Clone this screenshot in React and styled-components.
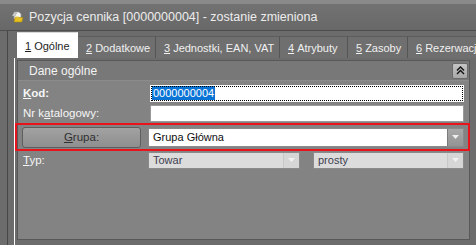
import React from "react";
import styled, { createGlobalStyle } from "styled-components";

const Global = createGlobalStyle`
  html, body { margin: 0; padding: 0; background: #6c6c6c; }
  body { font-family: "Liberation Sans", Arial, sans-serif; font-size: 11px; }
  #root { width: 476px; height: 245px; overflow: hidden; }
`;

const Window = styled.div`
  width: 476px;
  height: 245px;
  display: flex;
  flex-direction: column;
  background: #6c6c6c;
  box-shadow: inset 2px 0 #787878, inset 3px 0 #606060;
`;

const TitleBar = styled.div`
  height: 26px;
  flex-shrink: 0;
  border-top: 4px solid #8a8a8a;
  border-bottom: 1px solid #4e4e4e;
  background: linear-gradient(#727272, #686868);
  display: flex;
  align-items: center;
  padding-left: 11px;
  gap: 5px;
  color: #ececec;
  font-size: 12.5px;
`;

const TabStrip = styled.div`
  height: 27px;
  flex-shrink: 0;
  display: flex;
  align-items: flex-end;
  padding-left: 17px;
  overflow: hidden;
  box-shadow: inset 7px 0 #6c6c6c, inset 8px 0 #474747;
`;

const Tab = styled.div`
  height: ${(p) => (p.$active ? 26 : 22)}px;
  width: ${(p) => (p.$w ? `${p.$w}px` : "auto")};
  box-sizing: border-box;
  padding: 0 0 0 8px;
  display: flex;
  align-items: center;
  white-space: nowrap;
  flex-shrink: 0;
  background: ${(p) => (p.$active ? "#ffffff" : "#6f6f6f")};
  color: ${(p) => (p.$active ? "#1e1e1e" : "#f0f0f0")};
  border-right: 1px solid ${(p) => (p.$active ? "#ffffff" : "#555555")};
  border-top: 1px solid ${(p) => (p.$active ? "#d8d8d8" : "#5c5c5c")};
  font-size: 11px;
  u { text-decoration: underline; margin-right: 3px; }
`;

const Body = styled.div`
  flex: 1;
  display: flex;
  padding-left: 14px;
  box-shadow: inset 7px 0 #6c6c6c, inset 8px 0 #474747;
`;

const TabPage = styled.div`
  flex: 1;
  display: flex;
  border-left: 1px solid #ffffff;
  padding: 2px 6px 5px 2px;
`;

const GroupBox = styled.div`
  flex: 1;
  display: flex;
  flex-direction: column;
  border: 1px solid #585858;
  background: #838383;
`;

const GroupHeader = styled.div`
  height: 19px;
  display: flex;
  align-items: center;
  justify-content: space-between;
  padding: 0 1px 0 11px;
  background: #787878;
  border-bottom: 1px solid #8c8c8c;
  color: #f4f4f4;
  font-size: 12px;
`;

const CollapseBtn = styled.div`
  width: 14px;
  height: 14px;
  border: 1px solid #6a6a6a;
  border-radius: 2px;
  background: linear-gradient(#c4c4c4, #a8a8a8);
  display: flex;
  align-items: center;
  justify-content: center;
`;

const Form = styled.div`
  display: flex;
  flex-direction: column;
  padding: 2px 5px 0 5px;
`;

const Row = styled.div`
  display: flex;
  align-items: center;
  height: ${(p) => p.$h || 20}px;
  position: relative;
`;

const Label = styled.div`
  width: 127px;
  flex-shrink: 0;
  color: #f6f6f6;
  font-weight: ${(p) => (p.$bold ? 700 : 400)};
  font-size: 11.5px;
  u { text-decoration: underline; }
`;

const TextInput = styled.div`
  flex: 1;
  height: 17px;
  box-sizing: border-box;
  background: #ffffff;
  border: 1px solid ${(p) => (p.$focus ? "#ffffff" : "#9a9a9a")};
  outline: ${(p) => (p.$focus ? "1px dotted #000" : "none")};
  outline-offset: -2px;
  display: flex;
  align-items: center;
  padding-left: 1px;
  font-size: 11px;
`;

const Selected = styled.span`
  background: #0a74d6;
  color: #ffffff;
  padding: 0 1px;
  line-height: 14px;
`;

const RedFrame = styled.div`
  position: absolute;
  left: -8px;
  right: -6px;
  top: 0;
  bottom: 0;
  border: 2px solid #e8141c;
  pointer-events: none;
`;

const GroupButton = styled.div`
  width: 119px;
  height: 21px;
  box-sizing: border-box;
  margin-right: 7px;
  margin-left: -1px;
  border: 1px solid #5e5e5e;
  border-radius: 3px;
  background: linear-gradient(#a2a2a2, #8e8e8e);
  color: #303030;
  display: flex;
  align-items: center;
  justify-content: center;
  font-size: 11.5px;
  u { text-decoration: underline; }
`;

const Combo = styled.div`
  flex: ${(p) => (p.$w ? "0 0 auto" : 1)};
  width: ${(p) => (p.$w ? `${p.$w}px` : "auto")};
  height: ${(p) => p.$h || 17}px;
  box-sizing: border-box;
  margin-left: ${(p) => p.$ml || 0}px;
  display: flex;
  background: ${(p) => (p.$disabled ? "#dcdcdc" : "#ffffff")};
  border: 1px solid #8a8a8a;
  color: ${(p) => (p.$disabled ? "#404050" : "#101010")};
  font-size: 11px;
`;

const ComboText = styled.div`
  flex: 1;
  display: flex;
  align-items: center;
  padding-left: 4px;
`;

const ComboBtn = styled.div`
  width: 15px;
  display: flex;
  align-items: center;
  justify-content: center;
  background: ${(p) => (p.$disabled ? "#d6d6d6" : "linear-gradient(#a8a8a8, #949494)")};
  border-left: 1px solid ${(p) => (p.$disabled ? "#c8c8c8" : "#7a7a7a")};
`;

const Arrow = ({ color }) => (
  <svg width="7" height="4" viewBox="0 0 7 4">
    <path d="M0 0h7L3.5 4z" fill={color} />
  </svg>
);

const DocIcon = () => (
  <svg width="13" height="12" viewBox="0 0 13 12">
    <path d="M3 1h5l2 2v5H3z" fill="#f4f4f4" stroke="#9a9a9a" strokeWidth="0.8" />
    <path d="M1 5l2-3h2.5L4 5z" fill="#dcdcdc" stroke="#8a8a8a" strokeWidth="0.5" />
    <path d="M4 6.5h8l-1.2 4.5H3z" fill="#e6c020" stroke="#a88a10" strokeWidth="0.6" />
    <path d="M4.5 5.5h3l1 1h-4z" fill="#f0d040" />
  </svg>
);

const DoubleUp = () => (
  <svg width="9" height="9" viewBox="0 0 9 9">
    <path d="M1 4.5L4.5 1L8 4.5M1 8L4.5 4.5L8 8" fill="none" stroke="#111" strokeWidth="1.4" />
  </svg>
);

const tabs = [
  ["1", "Ogólne", 61],
  ["2", "Dodatkowe", 78],
  ["3", "Jednostki, EAN, VAT", 124],
  ["4", "Atrybuty", 68],
  ["5", "Zasoby", 60],
  ["6", "Rezerwacje", 0],
];

export default function App() {
  return (
    <>
      <Global />
      <Window>
        <TitleBar>
          <DocIcon />
          <span>Pozycja cennika [0000000004] - zostanie zmieniona</span>
        </TitleBar>
        <TabStrip>
          {tabs.map(([n, t, w], i) => (
            <Tab key={n} $active={i === 0} $w={w}>
              <u>{n}</u>
              {t}
            </Tab>
          ))}
        </TabStrip>
        <Body>
          <TabPage>
            <GroupBox>
              <GroupHeader>
                <span>Dane ogólne</span>
                <CollapseBtn>
                  <DoubleUp />
                </CollapseBtn>
              </GroupHeader>
              <Form>
                <Row $h={20}>
                  <Label $bold>
                    <u>K</u>od:
                  </Label>
                  <TextInput $focus>
                    <Selected>0000000004</Selected>
                  </TextInput>
                </Row>
                <Row $h={20}>
                  <Label>
                    Nr k<u>a</u>talogowy:
                  </Label>
                  <TextInput />
                </Row>
                <Row $h={28}>
                  <RedFrame />
                  <GroupButton>
                    <span>
                      <u>G</u>rupa:
                    </span>
                  </GroupButton>
                  <Combo $h={19}>
                    <ComboText>Grupa Główna</ComboText>
                    <ComboBtn>
                      <Arrow color="#eeeeee" />
                    </ComboBtn>
                  </Combo>
                </Row>
                <Row $h={18}>
                  <Label>
                    <u>T</u>yp:
                  </Label>
                  <Combo $w={152} $ml={-2} $disabled>
                    <ComboText>Towar</ComboText>
                    <ComboBtn $disabled>
                      <Arrow color="#f2f2f2" />
                    </ComboBtn>
                  </Combo>
                  <Combo $ml={13} $disabled>
                    <ComboText>prosty</ComboText>
                    <ComboBtn $disabled>
                      <Arrow color="#f2f2f2" />
                    </ComboBtn>
                  </Combo>
                </Row>
              </Form>
            </GroupBox>
          </TabPage>
        </Body>
      </Window>
    </>
  );
}
